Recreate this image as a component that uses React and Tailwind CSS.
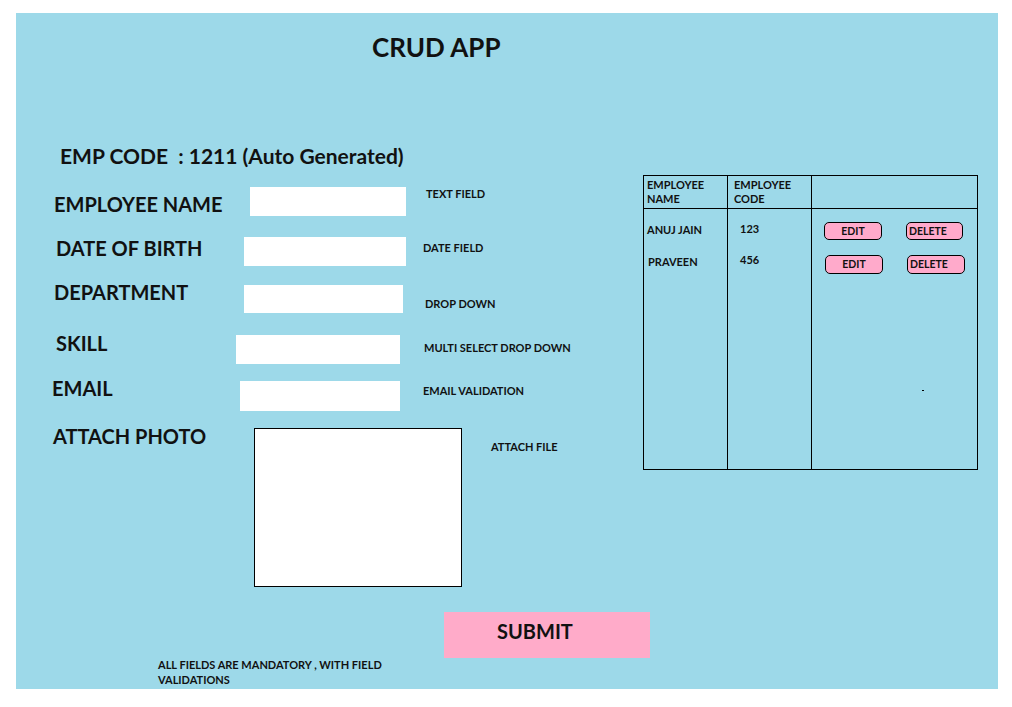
export default function App() {
  const font = "font-['Lato','Liberation_Sans',sans-serif] font-bold text-[#111]";

  return (
    <div className={`min-h-screen bg-white pt-[13px] pl-[16px] ${font}`}>
      <div className="w-[982px] h-[676px] bg-[#9dd9e9] flex flex-col">
        {/* Title */}
        <h1 className="pt-[21px] pl-[356px] text-[26px] leading-none">CRUD APP</h1>

        <div className="flex mt-[85px]">
          {/* Form */}
          <div className="w-[627px] shrink-0 flex flex-col">
            <p className="ml-[44px] text-[21px] leading-none whitespace-pre">EMP CODE  : 1211 (Auto Generated)</p>

            <div className="flex items-start mt-[21px]">
              <label className="w-[234px] shrink-0 pl-[38px] mt-[7px] text-[20px] leading-none">EMPLOYEE NAME</label>
              <div className="w-[156px] h-[29px] bg-white" />
              <span className="ml-[20px] mt-[1px] text-[11px] leading-none">TEXT FIELD</span>
            </div>

            <div className="flex items-start mt-[21px]">
              <label className="w-[228px] shrink-0 pl-[40px] mt-[1px] text-[20px] leading-none">DATE OF BIRTH</label>
              <div className="w-[162px] h-[29px] bg-white" />
              <span className="ml-[17px] mt-[5px] text-[11px] leading-none">DATE FIELD</span>
            </div>

            <div className="flex items-start mt-[19px]">
              <label className="w-[228px] shrink-0 pl-[38px] -mt-[3px] text-[20px] leading-none">DEPARTMENT</label>
              <div className="w-[159px] h-[28px] bg-white" />
              <span className="ml-[22px] mt-[13px] text-[11px] leading-none">DROP DOWN</span>
            </div>

            <div className="flex items-start mt-[22px]">
              <label className="w-[220px] shrink-0 pl-[40px] -mt-[2px] text-[20px] leading-none">SKILL</label>
              <div className="w-[164px] h-[29px] bg-white" />
              <span className="ml-[24px] mt-[7px] text-[11px] leading-none">MULTI SELECT DROP DOWN</span>
            </div>

            <div className="flex items-start mt-[17px]">
              <label className="w-[224px] shrink-0 pl-[36px] -mt-[3px] text-[20px] leading-none">EMAIL</label>
              <div className="w-[160px] h-[30px] bg-white" />
              <span className="ml-[23px] mt-[4px] text-[11px] leading-none">EMAIL VALIDATION</span>
            </div>

            <div className="flex items-start mt-[17px]">
              <label className="w-[238px] shrink-0 pl-[37px] -mt-[2px] text-[20px] leading-none">ATTACH PHOTO</label>
              <div className="w-[208px] h-[159px] bg-white border border-black" />
              <span className="ml-[29px] mt-[13px] text-[11px] leading-none">ATTACH FILE</span>
            </div>
          </div>

          {/* Employee table */}
          <div className="mt-[30px] w-[335px] h-[295px] border border-black flex text-[11px]">
            <div className="w-[84px] shrink-0 border-r border-black flex flex-col">
              <div className="h-[33px] border-b border-black pt-[2px] pl-[3px] leading-[14px]">EMPLOYEE<br />NAME</div>
              <div className="flex flex-col gap-[21px] pt-[15px] leading-none">
                <span className="pl-[3px]">ANUJ JAIN</span>
                <span className="pl-[4px]">PRAVEEN</span>
              </div>
            </div>
            <div className="w-[84px] shrink-0 border-r border-black flex flex-col">
              <div className="h-[33px] border-b border-black pt-[2px] pl-[6px] leading-[14px]">EMPLOYEE<br />CODE</div>
              <div className="flex flex-col gap-[20px] pt-[14px] pl-[12px] leading-none">
                <span>123</span>
                <span>456</span>
              </div>
            </div>
            <div className="flex-1 flex flex-col">
              <div className="h-[33px] border-b border-black" />
              <div className="relative flex-1 flex flex-col gap-[15px] pt-[13px] text-[10.5px] leading-none">
                <div className="flex items-start">
                  <button className="ml-[12px] w-[58px] h-[18px] flex items-center justify-center bg-[#ffaacb] border border-black rounded-[5px]">EDIT</button>
                  <button className="ml-[24px] w-[57px] h-[18px] flex items-center pl-[2px] bg-[#ffaacb] border border-black rounded-[5px]">DELETE</button>
                </div>
                <div className="flex items-start">
                  <button className="ml-[13px] w-[58px] h-[19px] flex items-center justify-center bg-[#ffaacb] border border-black rounded-[5px]">EDIT</button>
                  <button className="ml-[24px] w-[58px] h-[19px] flex items-center pl-[2px] bg-[#ffaacb] border border-black rounded-[5px]">DELETE</button>
                </div>
                <span className="absolute left-[110px] top-[181px] w-[2px] h-px bg-black" />
              </div>
            </div>
          </div>
        </div>

        {/* Submit + note */}
        <div className="flex items-start mt-[25px]">
          <p className="ml-[142px] w-[286px] mt-[45px] text-[11px] leading-[15px]">
            ALL FIELDS ARE MANDATORY , WITH FIELD<br />VALIDATIONS
          </p>
          <button className="w-[206px] h-[46px] bg-[#ffabc9] text-left pl-[53px] pt-[9px] self-start flex items-start text-[20px] leading-none">SUBMIT</button>
        </div>
      </div>
    </div>
  );
}
